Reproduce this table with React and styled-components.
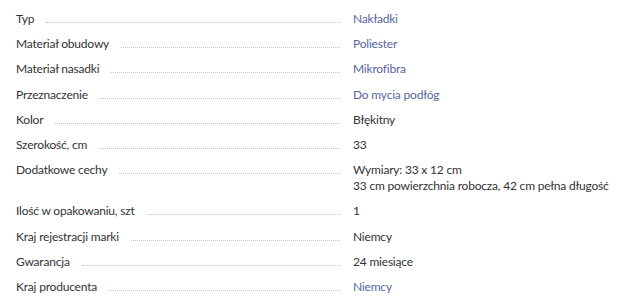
import React from 'react';
import styled, { createGlobalStyle } from 'styled-components';

const GlobalStyle = createGlobalStyle`
  html, body {
    margin: 0;
    padding: 0;
    background: #fff;
  }
  body {
    font-family: Lato, "Noto Sans", sans-serif;
    color: #333;
  }
`;

const Table = styled.div`
  padding: 11px 12px 0 16px;
  display: flex;
  flex-direction: column;
`;

const Row = styled.div`
  display: grid;
  grid-template-columns: 324px 1fr;
  column-gap: 13px;
  align-items: start;
`;

const Label = styled.div`
  display: flex;
  align-items: baseline;
  font-size: 12px;
  line-height: 16px;
  letter-spacing: -0.2px;
  color: #333;
  white-space: nowrap;
`;

const Dots = styled.span`
  flex: 1;
  margin-left: 12px;
  border-bottom: 1px dotted #c4c4c4;
`;

const Value = styled.div`
  font-size: 12px;
  line-height: 16px;
  letter-spacing: -0.2px;
  white-space: nowrap;
  color: ${(p) => (p.$link ? '#5866a0' : '#333')};
  padding-bottom: 9.2px;
`;

const rows = [
  { label: 'Typ', value: ['Nakładki'], link: true },
  { label: 'Materiał obudowy', value: ['Poliester'], link: true },
  { label: 'Materiał nasadki', value: ['Mikrofibra'], link: true },
  { label: 'Przeznaczenie', value: ['Do mycia podłóg'], link: true },
  { label: 'Kolor', value: ['Błękitny'] },
  { label: 'Szerokość, cm', value: ['33'] },
  {
    label: 'Dodatkowe cechy',
    value: ['Wymiary: 33 x 12 cm', '33 cm powierzchnia robocza, 42 cm pełna długość'],
  },
  { label: 'Ilość w opakowaniu, szt', value: ['1'] },
  { label: 'Kraj rejestracji marki', value: ['Niemcy'] },
  { label: 'Gwarancja', value: ['24 miesiące'] },
  { label: 'Kraj producenta', value: ['Niemcy'], link: true },
];

const App = () => {
  return (
    <>
      <GlobalStyle />
      <Table>
        {rows.map((r) => (
          <Row key={r.label}>
            <Label>
              {r.label}
              <Dots />
            </Label>
            <Value $link={r.link}>
              {r.value.map((v) => (
                <div key={v}>{v}</div>
              ))}
            </Value>
          </Row>
        ))}
      </Table>
    </>
  );
};

export default App;
